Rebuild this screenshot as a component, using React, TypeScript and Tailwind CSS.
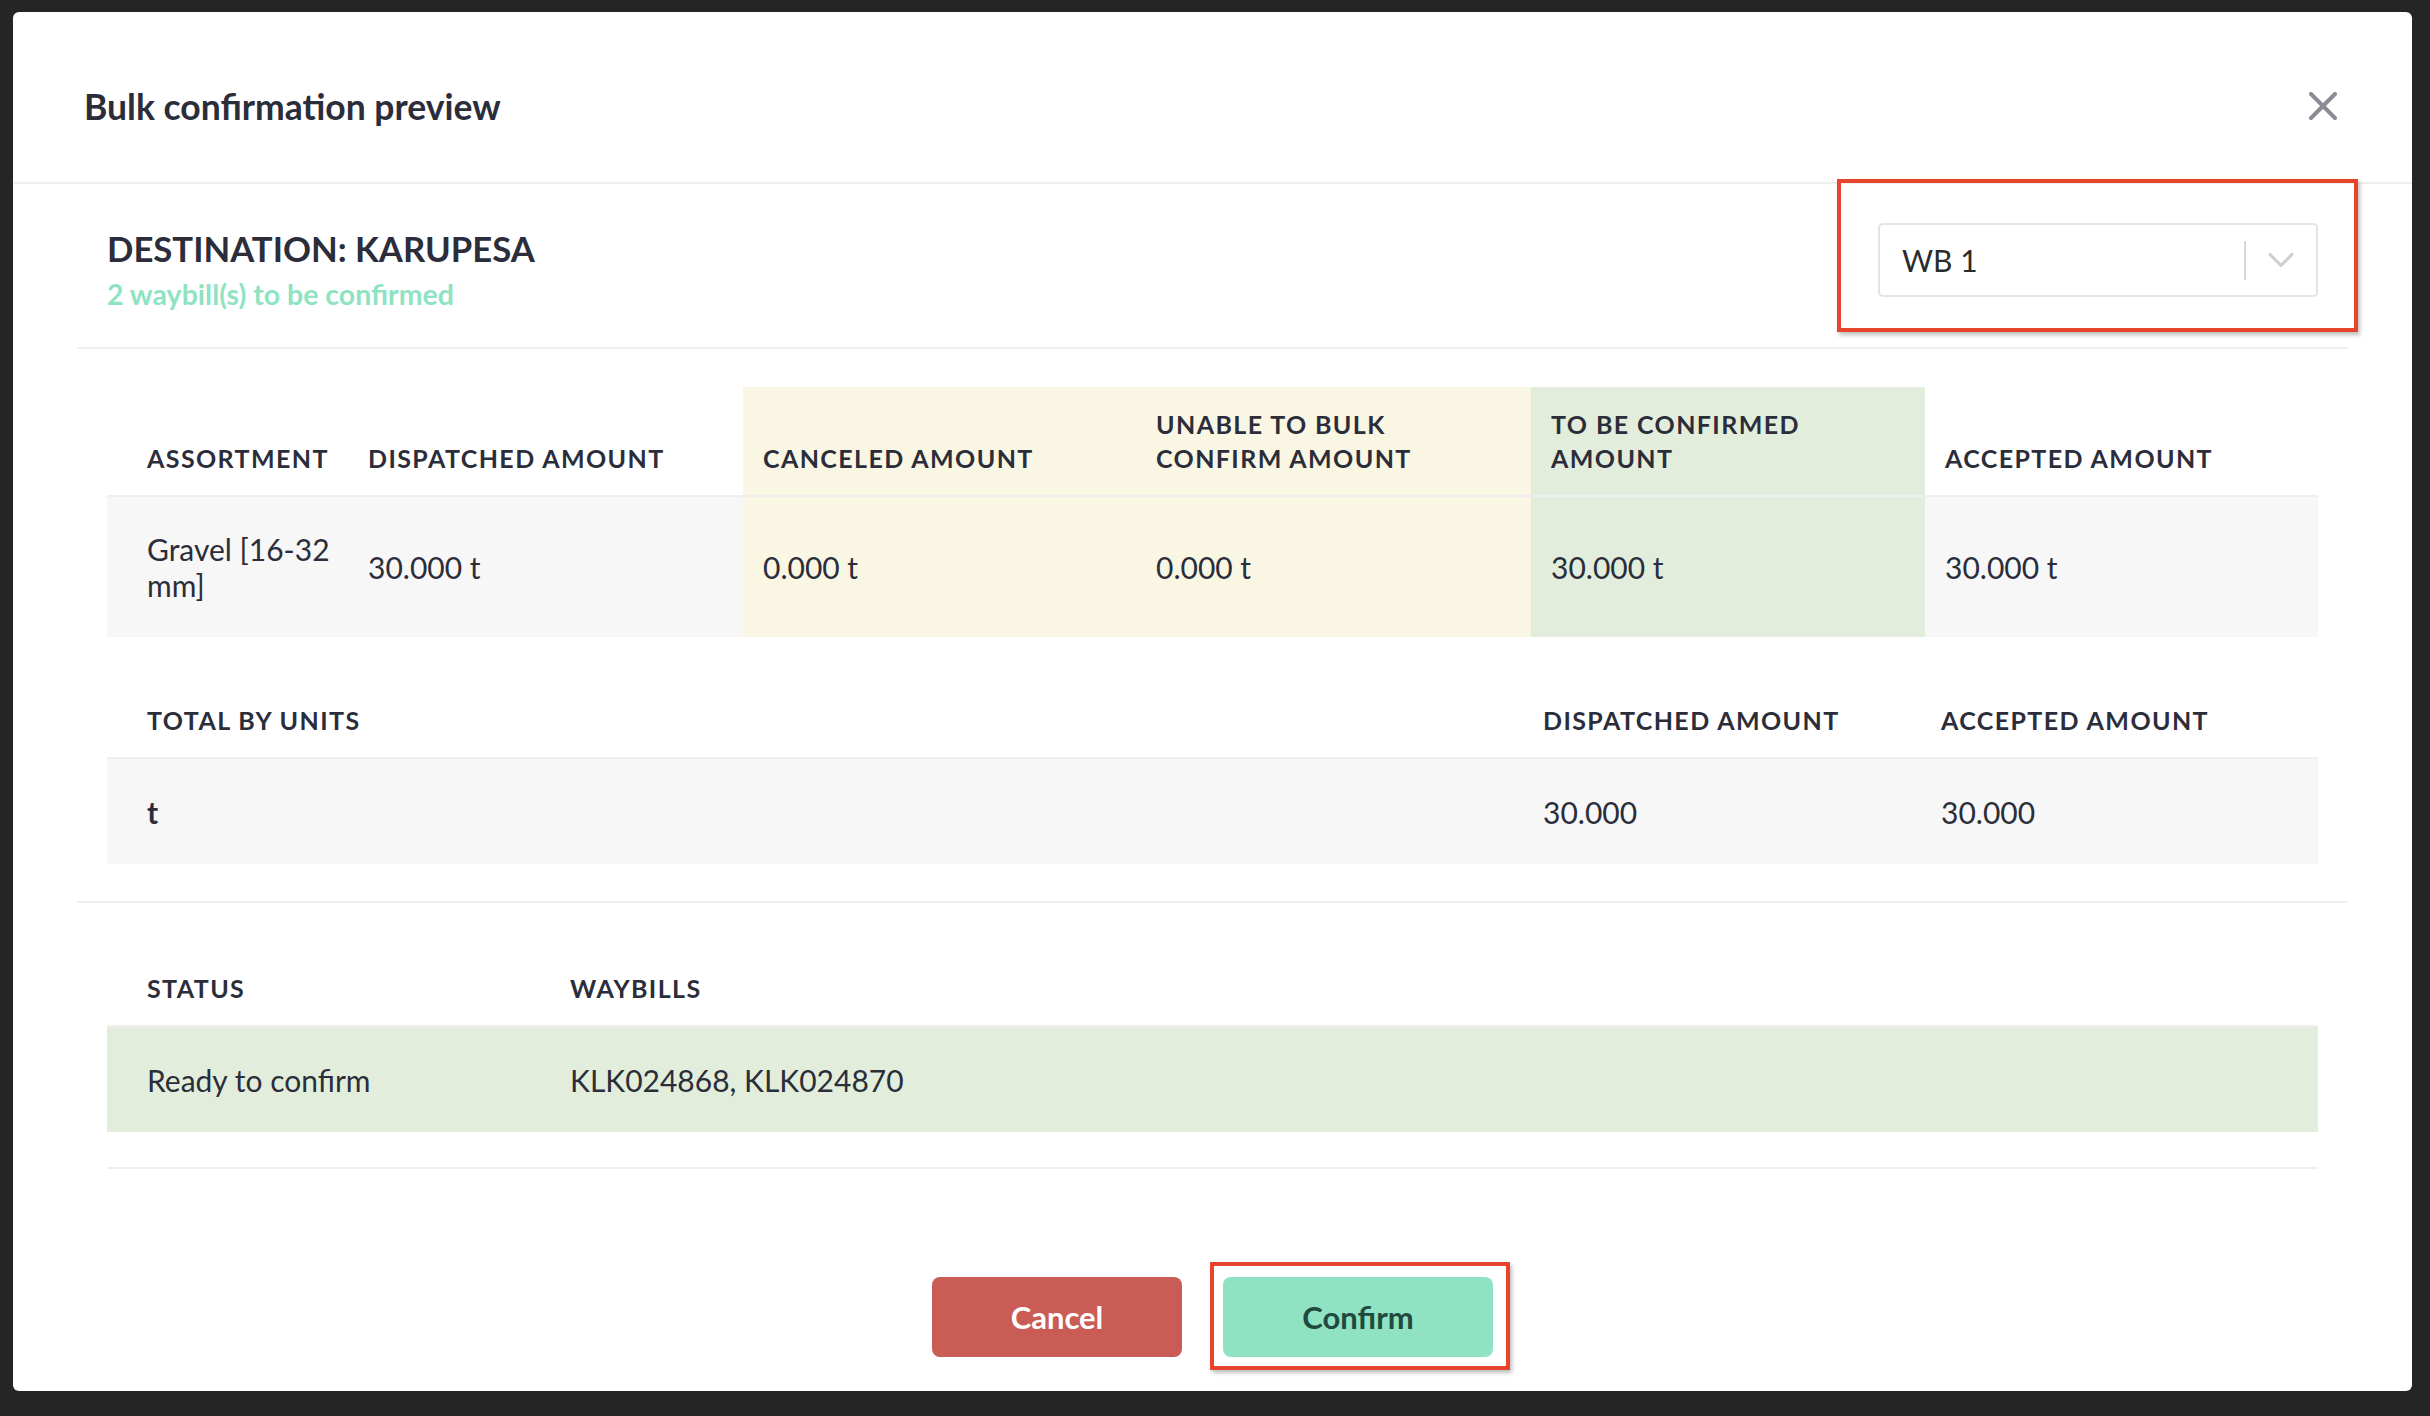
import { ChevronDown } from 'lucide-react';

const head = "text-[25px] leading-[34px] font-bold tracking-[1.4px] uppercase text-[#2b2e3a]";
const cell = "text-[30px] leading-[36px] text-[#2b2e3a]";

function CloseIcon() {
  return (
    <svg width="28" height="28" viewBox="0 0 28 28" fill="none">
      <path d="M2 2 L26 26 M26 2 L2 26" stroke="#8b8b96" strokeWidth="4" strokeLinecap="round" />
    </svg>
  );
}

function Annotation({ className }: { className: string }) {
  return (
    <div className={`pointer-events-none absolute border-4 border-[#e8432b] shadow-[2px_3px_4px_rgba(0,0,0,0.25)] ${className}`} />
  );
}

export default function App() {
  return (
    <div className="w-[2430px] h-[1416px] bg-[#252525] pl-[13px] pt-[12px] font-['Lato','Liberation_Sans',sans-serif]">
      <div className="w-[2399px] h-[1379px] bg-white rounded-[6px] flex flex-col">
        {/* header */}
        <div className="h-[172px] border-b-2 border-[#efefef] flex items-start justify-between pl-[71px] pr-[75px] pt-[74px]">
          <h1 className="text-[35.5px] leading-[42px] font-bold text-[#2b2e3a]">Bulk confirmation preview</h1>
          <button className="mt-[6px]">
            <CloseIcon />
          </button>
        </div>

        <div className="mx-[64px]">
          {/* destination */}
          <div className="flex justify-between items-start px-[30px] pt-[39px] pb-[36px] border-b-2 border-[#efefef]">
            <div className="pt-[5px]">
              <p className="text-[34.7px] leading-[42px] font-bold text-[#2b2e3a]">DESTINATION: KARUPESA</p>
              <p className="mt-[7px] text-[28.5px] leading-[34px] font-bold text-[#8fe3c2]">2 waybill(s) to be confirmed</p>
            </div>
            <div className="relative">
              <div className="w-[440px] h-[74px] border-2 border-[#e4e4e4] rounded-[5px] flex items-center pl-[22px] pr-[13px]">
                <span className="flex-1 text-[30px] text-[#2b2b2b]">WB 1</span>
                <div className="w-[2px] h-[39px] bg-[#d6d6d6] mr-[13px]" />
                <ChevronDown className="w-[44px] h-[44px] text-[#cfcfcf]" strokeWidth={1.7} />
              </div>
              <Annotation className="-left-[41px] -right-[40px] -top-[44px] -bottom-[35px]" />
            </div>
          </div>

          {/* amounts + totals */}
          <div className="px-[30px] pt-[38px] pb-[37px] border-b-2 border-[#efefef]">
            <div className="grid grid-cols-[241px_395px_393px_395px_394px_394px] border-b-2 border-[#efefef]">
              <div className={`${head} pl-[40px] pr-[10px] py-[20px] flex items-end`}>Assortment</div>
              <div className={`${head} px-[20px] py-[20px] flex items-end`}>Dispatched amount</div>
              <div className={`${head} px-[20px] py-[20px] flex items-end bg-[#f9f7e4]`}>Canceled amount</div>
              <div className={`${head} px-[20px] py-[20px] flex items-end bg-[#f9f7e4]`}>
                <span>Unable to bulk<br />confirm amount</span>
              </div>
              <div className={`${head} px-[20px] py-[20px] flex items-end bg-[#e2eedb]`}>
                <span>To be confirmed<br />amount</span>
              </div>
              <div className={`${head} px-[20px] py-[20px] flex items-end`}>Accepted amount</div>
            </div>
            <div className="grid grid-cols-[241px_395px_393px_395px_394px_394px] h-[140px] bg-[#f7f7f7]">
              <div className={`${cell} pl-[40px] pr-[10px] flex items-center`}>
                <span>Gravel [16-32<br />mm]</span>
              </div>
              <div className={`${cell} px-[20px] flex items-center`}>30.000 t</div>
              <div className={`${cell} px-[20px] flex items-center bg-[#f9f7e4]`}>0.000 t</div>
              <div className={`${cell} px-[20px] flex items-center bg-[#f9f7e4]`}>0.000 t</div>
              <div className={`${cell} px-[20px] flex items-center bg-[#e2eedb]`}>30.000 t</div>
              <div className={`${cell} px-[20px] flex items-center`}>30.000 t</div>
            </div>

            <div className="mt-[46px] grid grid-cols-[1416px_398px_398px] border-b-2 border-[#efefef]">
              <div className={`${head} pl-[40px] py-[20px]`}>Total by units</div>
              <div className={`${head} px-[20px] py-[20px]`}>Dispatched amount</div>
              <div className={`${head} px-[20px] py-[20px]`}>Accepted amount</div>
            </div>
            <div className="grid grid-cols-[1416px_398px_398px] h-[105px] items-center bg-[#f7f7f7]">
              <div className={`${cell} pl-[40px] font-bold`}>t</div>
              <div className={`${cell} px-[20px]`}>30.000</div>
              <div className={`${cell} px-[20px]`}>30.000</div>
            </div>
          </div>

          {/* status */}
          <div className="px-[30px] pt-[48px]">
            <div className="pb-[35px] border-b-2 border-[#efefef]">
              <div className="grid grid-cols-[443px_1fr] border-b-2 border-[#efefef]">
                <div className={`${head} pl-[40px] py-[20px]`}>Status</div>
                <div className={`${head} px-[20px] py-[20px]`}>Waybills</div>
              </div>
              <div className="grid grid-cols-[443px_1fr] h-[105px] items-center bg-[#e2eedb]">
                <div className={`${cell} pl-[40px]`}>Ready to confirm</div>
                <div className={`${cell} px-[20px]`}>KLK024868, KLK024870</div>
              </div>
            </div>
          </div>
        </div>

        {/* footer */}
        <div className="flex justify-center gap-[41px] pt-[108px]">
          <button className="w-[250px] h-[80px] rounded-[8px] bg-[#c95d55] text-white text-[31px] font-bold">Cancel</button>
          <div className="relative">
            <button className="w-[270px] h-[80px] rounded-[8px] bg-[#8fe2c2] text-[#1f4a40] text-[31px] font-bold">Confirm</button>
            <Annotation className="-left-[13px] -right-[17px] -top-[15px] -bottom-[13px]" />
          </div>
        </div>
      </div>
    </div>
  );
}
